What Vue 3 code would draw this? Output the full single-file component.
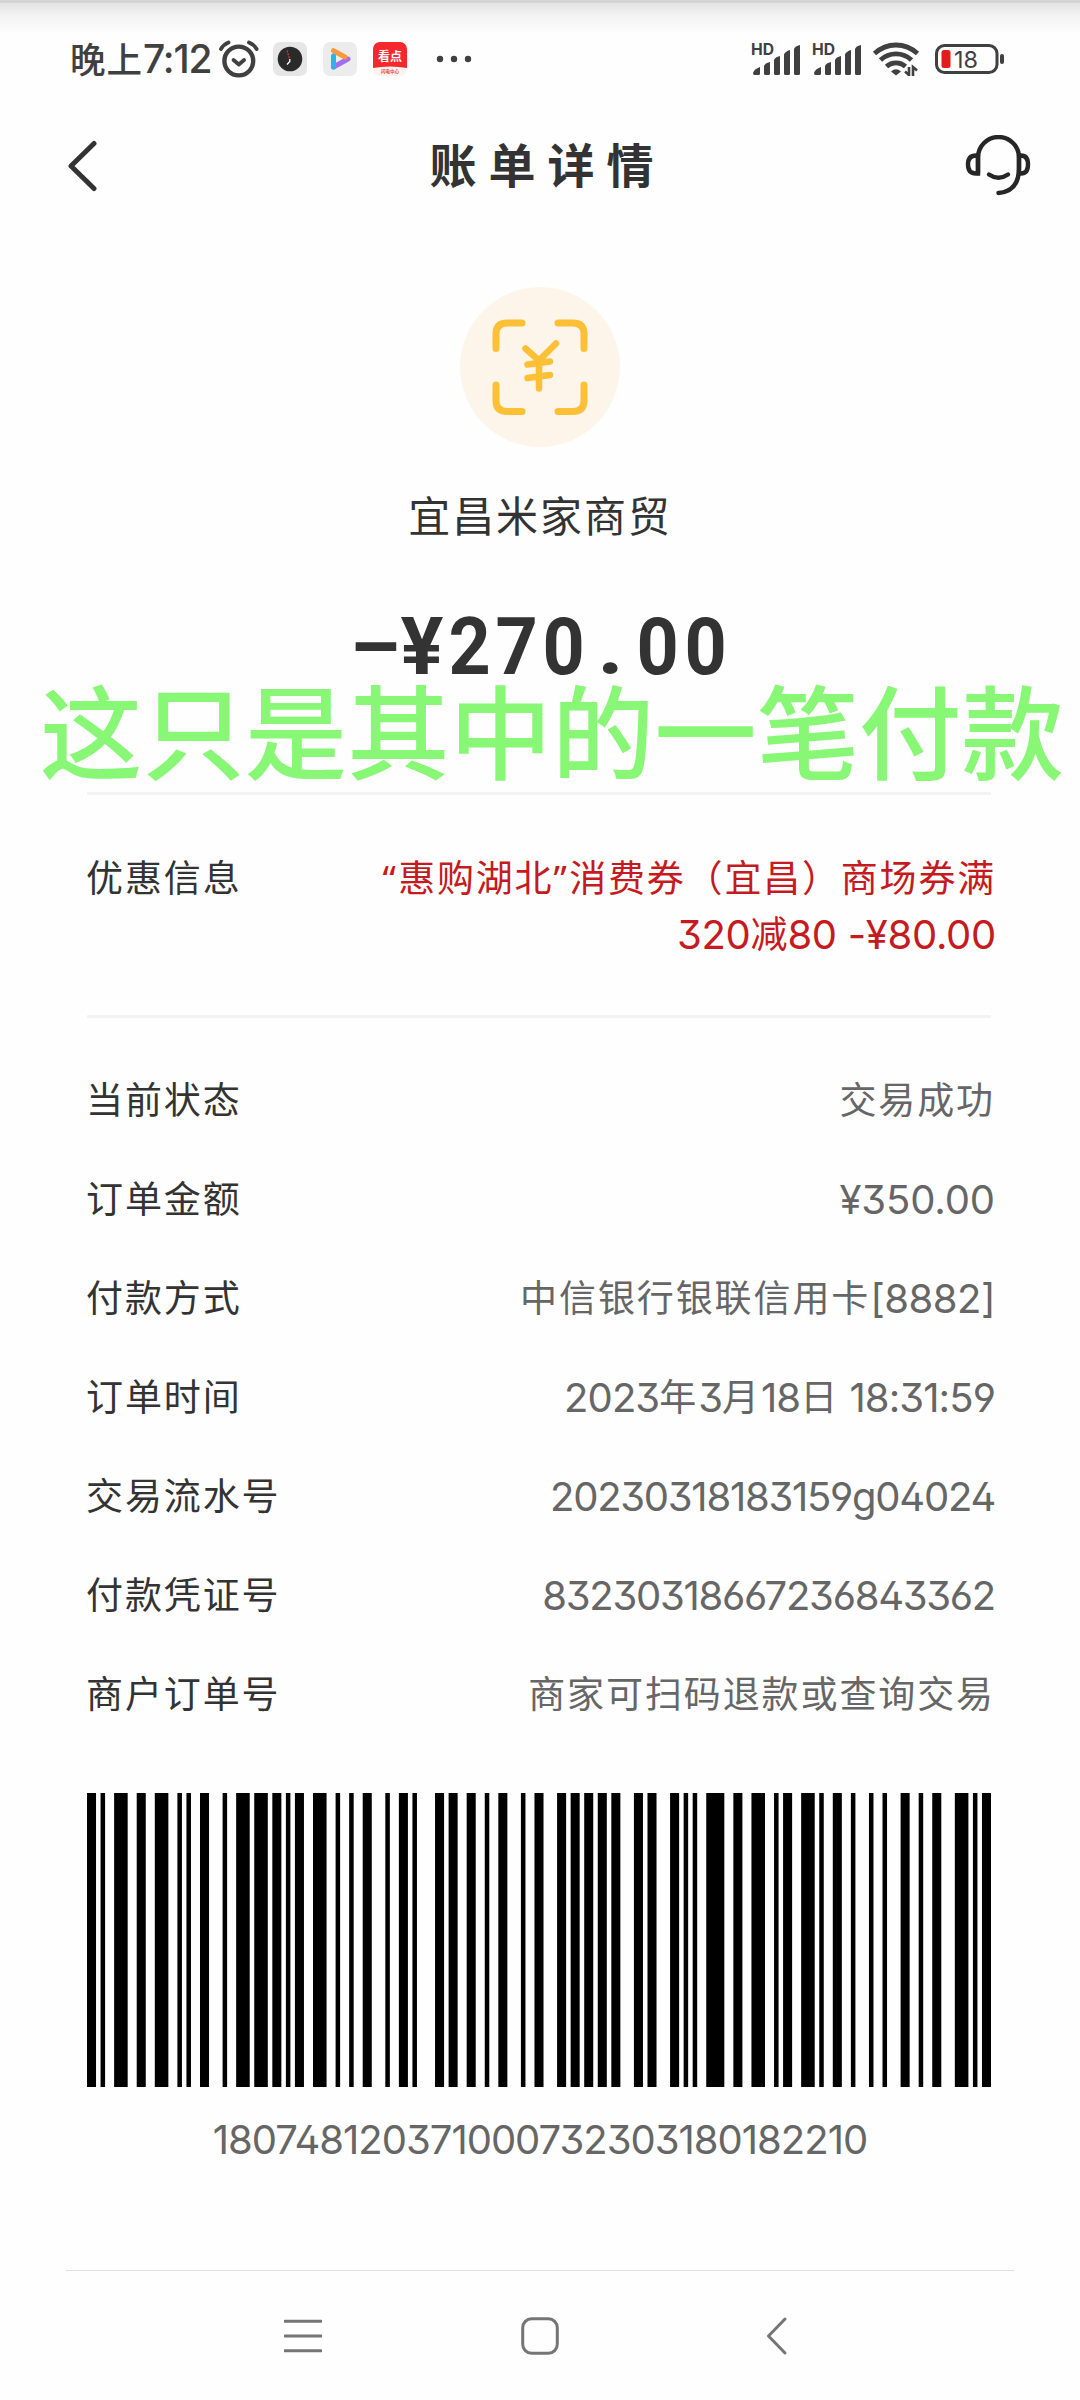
<script setup>
    import { computed } from 'vue';

    const serial = '180748120371000732303180182210';
    const amount = '–¥270.00';
    const caption = '这只是其中的一笔付款';

    const rows = [
        {label:'当前状态', value:'交易成功', fit:'loose'},
        {label:'订单金额', value:'¥350.00', fit:'loose'},
        {label:'付款方式', value:'中信银行银联信用卡[8882]', fit:'card'},
        {label:'订单时间', value:'2023年3月18日 18:31:59', fit:'snug'},
        {label:'交易流水号', value:'20230318183159g04024', fit:'tight'},
        {label:'付款凭证号', value:'83230318667236843362', fit:'tight'},
        {label:'商户订单号', value:'商家可扫码退款或查询交易', fit:'loose'}
    ];

    // digits are set a little larger than the hanzi next to them
    const split = (text) => text.split(/([^\u4e00-\u9fa5]+)/).filter(Boolean).map(part => {
        return {part, latin:!/[\u4e00-\u9fa5]/.test(part)};
    });

    // Code 128, set C: only the symbols this serial needs
    const code128 = {
        0:'212222', 3:'121223', 7:'122312', 8:'132212', 10:'221312', 12:'112232',
        18:'223211', 22:'223112', 30:'212123', 31:'212321', 32:'232121', 48:'313121',
        71:'122114', 80:'111242', 105:'211232', 106:'2331112'
    };

    const bars = computed(() => {
        const pairs = serial.match(/../g).map(Number);
        const check = pairs.reduce((sum, value, index) => sum + value * (index + 1), 105) % 103;
        const widths = [105, ...pairs, check, 106].map(value => code128[value]).join('');
        const list = [];
        let x = 0;
        widths.split('').forEach((w, index) => {
            if (index % 2 == 0) {
                list.push({x, w:Number(w)});
            }
            x += Number(w);
        });
        return list;
    });
</script>

<template>
    <div class="page">
        <div class="status">
            <span class="time">晚上<b>7:12</b></span>
            <svg class="alarm" width="40" height="38" viewBox="0 0 40 38" fill="none" stroke="#404040" stroke-linecap="round" stroke-linejoin="round">
                <circle cx="19.800" cy="21" r="14.400" stroke-width="4.400" />
                <path d="M14.500 20l5.300 4.500 5.300-4.500" stroke-width="3.800" />
                <path d="M2 9Q4.500 4.500 9.500 2.500M37.600 9Q35 4.500 30 2.500" stroke-width="3.800" />
            </svg>
            <svg class="app" width="34" height="34" viewBox="0 0 34 34">
                <rect width="34" height="34" rx="7" fill="#e6e6e6" />
                <circle cx="17" cy="17" r="12.300" fill="#2a2a2a" />
                <path d="M14 8.500l2.500 8" stroke="#d33a32" stroke-width="1.300" stroke-dasharray="2 1" />
                <path d="M16.800 17v2.500L14 22.500" stroke="#fff" stroke-width="1.300" fill="none" />
            </svg>
            <svg class="app" width="34" height="34" viewBox="0 0 34 34" stroke-linejoin="round" stroke-linecap="round" fill="none">
                <rect width="34" height="34" rx="7" fill="#ececec" />
                <path d="M10.500 25L25 17" stroke="#a56bf0" stroke-width="5" />
                <path d="M10.500 8.700L22 15" stroke="#f79a3c" stroke-width="5" />
                <path d="M10.500 14v11" stroke="#2fb1ea" stroke-width="5" />
            </svg>
            <svg class="app" width="34" height="34" viewBox="0 0 34 34">
                <rect width="34" height="34" rx="7" fill="#fff3f0" />
                <path d="M0 7a7 7 0 0 1 7-7h20a7 7 0 0 1 7 7v19q-17-3-34 0z" fill="#f5282d" />
                <text x="17" y="18.800" text-anchor="middle" class="kd">看点</text>
                <text x="17" y="31" text-anchor="middle" class="kd-sub">闪电中心</text>
            </svg>
            <svg class="more" width="36" height="8" viewBox="0 0 36 8" fill="#404040">
                <circle cx="4" cy="4" r="3.200" /><circle cx="18" cy="4" r="3.200" /><circle cx="32" cy="4" r="3.200" />
            </svg>
            <div class="spacer"></div>
            <svg v-for="n in 2" :key="n" class="signal" width="50" height="50" viewBox="0 -8 50 50" fill="#404040">
                <text x="0" y="13" class="hd" textLength="23" lengthAdjust="spacingAndGlyphs">HD</text>
                <path d="M2 31Q3 27 9 25V31.500Q9 33 7.500 33H3.500Q2 33 2 31zM13 24Q14 21 19 20V31.500Q19 33 17.500 33H14.500Q13 33 13 31.500zM23 18Q24 15 29 14V31.500Q29 33 27.500 33H24.500Q23 33 23 31.500zM33 12.500Q34 9.500 39 8V31.500Q39 33 37.500 33H34.500Q33 33 33 31.500zM43 7Q44 4 49 3V31.500Q49 33 47.500 33H44.500Q43 33 43 31.500z" />
            </svg>
            <svg class="wifi" width="48" height="36" viewBox="0 0 48 36" fill="none" stroke="#404040" stroke-width="4.800">
                <path d="M2.500 12.500Q12 4 24 4T45.500 12.500M8.500 19Q15 12.800 24 12.800T39.500 19M14.500 25.500Q18.500 21.800 24 21.800T33.500 25.500" />
                <path d="M19 30.500Q24 26 29 30.500L24 34.500z" fill="#404040" stroke="none" />
                <path d="M33 30.500l4 3.500M37 26v9M41 35v-9l4 3.500" stroke-width="2.600" />
            </svg>
            <svg class="battery" width="70" height="30" viewBox="0 0 70 30">
                <rect x="1.500" y="1.500" width="60.500" height="27" rx="8" fill="none" stroke="#404040" stroke-width="3" />
                <rect x="6.500" y="6" width="9" height="18" rx="2.500" fill="#e31b1b" />
                <text x="19" y="23.500" class="level" textLength="24" lengthAdjust="spacingAndGlyphs">18</text>
                <rect x="65" y="10" width="4" height="10" rx="2" fill="#404040" />
            </svg>
        </div>

        <div class="header">
            <svg width="32" height="52" viewBox="0 0 32 52" fill="none" stroke="#333" stroke-width="5" stroke-linecap="round" stroke-linejoin="round">
                <path d="M27 3.500L4 26l23 22.500" />
            </svg>
            <h1>账单详情</h1>
            <svg width="66" height="62" viewBox="0 0 66 62" fill="none" stroke="#262626" stroke-width="4.400" stroke-linecap="round">
                <path d="M13 38V22.500a20.500 20.500 0 0 1 41 0V33Q54 56.500 33.500 58" />
                <path d="M13 20.500H11Q3 20.500 3 29.500T11 38.500H13zM54 20.500h2Q63 20.500 63 29.500T56 38.500H54z" />
                <path d="M24 39.500q9.500 6.500 19 0" />
            </svg>
        </div>

        <svg class="logo" width="160" height="160" viewBox="0 0 160 160" fill="none" stroke="#fcc036" stroke-width="7" stroke-linecap="round" stroke-linejoin="round">
            <circle cx="80" cy="80" r="80" fill="#fef5ea" stroke="none" />
            <path d="M36 61.500V47Q36 36 47 36H62M98 36h15Q124 36 124 47V61.500M124 98v15.500Q124 124.500 113 124.500H98M62 124.500H47Q36 124.500 36 113.500V98" />
            <path d="M65.500 61.500L79 73.500L96 56.500M79 73.500V101.500M67.500 77.500L90 74.500M67.500 91L90 88" stroke-width="6.500" />
        </svg>
        <div class="merchant">宜昌米家商贸</div>
        <div class="amount">
            <span v-for="char, index in amount" :key="index" :class="{'-digit':index > 1, '-dot':char == '.'}">{{ char }}</span>
            <div class="caption">{{ caption }}</div>
        </div>

        <div class="promo">
            <span class="label">优惠信息</span>
            <div class="offer">
                <div class="first"><i>“</i>惠购湖北<i>”</i>消费券（宜昌）商场券满</div>
                <div class="second">
                    <span v-for="item, index in split('320减80 -¥80.00')" :key="index" :class="{latin:item.latin}">{{ item.part }}</span>
                </div>
            </div>
        </div>

        <div class="rows">
            <div v-for="row in rows" :key="row.label" class="row">
                <span class="label">{{ row.label }}</span>
                <span class="value" :class="'-'+row.fit">
                    <span v-for="item, index in split(row.value)" :key="index" :class="{latin:item.latin}">{{ item.part }}</span>
                </span>
            </div>
        </div>

        <svg class="barcode" width="904" height="294" viewBox="0 0 200 100" preserveAspectRatio="none">
            <rect v-for="bar in bars" :key="bar.x" :x="bar.x" y="0" :width="bar.w" height="100" />
        </svg>
        <div class="serial">{{ serial }}</div>

        <div class="nav">
            <svg width="38" height="40" viewBox="0 0 38 40"><path d="M1 5.200h36M1 20h36M1 34.800h36" /></svg>
            <svg width="38" height="40" viewBox="0 0 38 40"><rect x="1.700" y="2.700" width="34.600" height="34.600" rx="9" /></svg>
            <svg width="38" height="40" viewBox="0 0 38 40"><path d="M27 3L10.500 20L27 37" /></svg>
        </div>
    </div>
</template>

<style>
    body {
        margin: 0;
        background: #fefefe;
    }
</style>

<style scoped>
    .page {
        width: 1080px;
        height: 2400px;
        display: flex;
        flex-direction: column;
        box-sizing: border-box;
        overflow: hidden;
        background: linear-gradient(#d4d4d4 0 3px, #e3e3e3 3px, #f3f3f3 16px, #fefefe 34px);
        font-family: Inter, "Noto Sans CJK SC", sans-serif;
        font-feature-settings: "ss01", "cv09";
        color: #333;
    }

    .status {
        height: 118px;
        padding: 0 75px 0 70px;
        display: flex;
        align-items: center;
        color: #404040;
    }

    .time {
        width: 149px;
        padding-bottom: 4px;
        font-size: 35.5px;
        font-weight: 500;
        letter-spacing: 1px;
        white-space: nowrap;
    }

    .time b {
        font-size: 39px;
        font-weight: 500;
        letter-spacing: -1.2px;
    }

    .alarm {
        margin-right: 14px;
    }

    .app {
        margin-right: 16px;
    }

    .kd {
        font: 700 12px "Noto Sans CJK SC", sans-serif;
        fill: #fff;
    }

    .kd-sub {
        font: 700 4.5px "Noto Sans CJK SC", sans-serif;
        fill: #e04a40;
    }

    .more {
        margin-left: 13px;
    }

    .spacer {
        flex: 1;
    }

    .signal {
        margin-right: 10.5px;
    }

    .hd {
        font: 700 16px Inter, sans-serif;
    }

    .wifi {
        margin-right: 15px;
    }

    .level {
        font: 400 23.5px Inter, sans-serif;
        fill: #404040;
    }

    .header {
        height: 96px;
        padding: 0 49px 0 67px;
        display: flex;
        align-items: center;
        justify-content: space-between;
    }

    h1 {
        margin: 0;
        padding: 0 0 7px 31px;
        font-size: 47px;
        font-weight: 700;
        letter-spacing: 12px;
    }

    .logo {
        margin: 73px auto 0;
    }

    .merchant {
        margin-top: 40px;
        line-height: 60px;
        text-align: center;
        font-size: 42px;
        letter-spacing: 1.9px;
    }

    .amount {
        position: relative;
        height: 80px;
        margin-top: 60px;
        line-height: 80px;
        display: flex;
        justify-content: center;
        font-family: Roboto, sans-serif;
        font-size: 80px;
        font-weight: 700;
    }

    .amount span {
        width: 47.2px;
        display: flex;
        justify-content: center;
    }

    .amount .-digit {
        transform: scaleX(.92);
    }

    .amount .-dot {
        transform: scaleX(1.15);
    }

    /* caption laid over the bill */
    .caption {
        position: absolute;
        left: 40px;
        top: 78px;
        white-space: nowrap;
        line-height: 100px;
        font-family: Inter, "Noto Sans CJK SC", sans-serif;
        font-size: 102.4px;
        font-weight: 500;
        color: #88f776;
    }

    .promo {
        margin: 105px 89px 0 87px;
        padding: 56px 0 53px;
        display: flex;
        justify-content: space-between;
        border-top: 3px solid #f3f3f3;
        border-bottom: 3px solid #f3f3f3;
        line-height: 55.5px;
        font-size: 37px;
    }

    .label {
        margin-left: -1px;
        letter-spacing: 1.9px;
        white-space: nowrap;
    }

    .offer {
        margin-right: -5px;
        text-align: right;
        white-space: nowrap;
        color: #c51a20;
    }

    .first {
        letter-spacing: 1.8px;
    }

    .first i {
        font-family: "Noto Sans", sans-serif;
        font-style: normal;
        line-height: 0;
        letter-spacing: 2.5px;
    }

    .latin {
        font-size: 40px;
        line-height: 0;
        vertical-align: -1px;
        white-space: pre;
    }

    .second .latin {
        letter-spacing: -.3px;
    }

    .rows {
        margin: 33px 85px 0 87px;
        font-size: 37px;
        line-height: 99px;
    }

    .row {
        height: 99px;
        display: flex;
        align-items: baseline;
        justify-content: space-between;
    }

    .value {
        color: #666;
        white-space: nowrap;
        letter-spacing: 1.9px;
    }

    .value.-loose > .latin {
        letter-spacing: -.1px;
    }

    .value.-card > .latin {
        letter-spacing: -.5px;
    }

    .value.-snug > .latin {
        letter-spacing: -.9px;
    }

    .value.-tight > .latin {
        letter-spacing: -1.25px;
    }

    .barcode {
        margin: 49px 0 0 87px;
    }

    .serial {
        margin-top: 25px;
        line-height: 55px;
        text-align: center;
        font-size: 40px;
        letter-spacing: -1px;
        color: #666;
    }

    .nav {
        height: 129px;
        margin: auto 66px 0;
        display: flex;
        align-items: center;
        justify-content: center;
        gap: 199px;
        border-top: 1px solid #e0e0e0;
    }

    .nav svg {
        fill: none;
        stroke: #757575;
        stroke-width: 3;
        stroke-linecap: round;
        stroke-linejoin: round;
    }
</style>
